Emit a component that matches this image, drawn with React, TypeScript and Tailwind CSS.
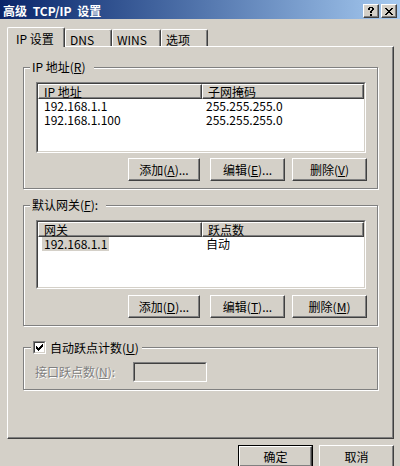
import React from "react";

const raised =
  "border border-t-white border-l-white border-r-[#404040] border-b-[#404040] shadow-[inset_-1px_-1px_0_#808080]";

function U({ children }: { children: React.ReactNode }) {
  return <span className="underline underline-offset-[1px] decoration-1">{children}</span>;
}

function Btn({ children, className = "" }: { children: React.ReactNode; className?: string }) {
  return (
    <div className={`h-[23px] flex items-center justify-center bg-[#d4d0c8] ${raised} ${className}`}>
      <span className="leading-[12px] whitespace-nowrap">{children}</span>
    </div>
  );
}

function Sunken({
  className = "",
  inner = "",
  children,
}: {
  className?: string;
  inner?: string;
  children?: React.ReactNode;
}) {
  return (
    <div className={`border border-t-[#808080] border-l-[#808080] border-r-white border-b-white ${className}`}>
      <div
        className={`h-full w-full border border-t-[#404040] border-l-[#404040] border-r-[#d4d0c8] border-b-[#d4d0c8] ${inner}`}
      >
        {children}
      </div>
    </div>
  );
}

function HeaderCell({ children, className = "" }: { children: React.ReactNode; className?: string }) {
  return (
    <div className={`h-[15px] flex items-center pl-[5px] bg-[#d4d0c8] ${raised} ${className}`}>
      <span className="leading-[12px]">{children}</span>
    </div>
  );
}

type Row = { a: string; b: string; sel?: boolean };

function ListView({ height, header, rows }: { height: string; header: [string, string]; rows: Row[] }) {
  return (
    <Sunken className={`w-[330px] ${height}`} inner="bg-white flex flex-col overflow-hidden">
      <div className="flex">
        <HeaderCell className="w-[164px]">{header[0]}</HeaderCell>
        <HeaderCell className="flex-1">{header[1]}</HeaderCell>
      </div>
      {rows.map((r, i) => (
        <div key={i} className="flex h-[14px]">
          <div className="w-[164px] pl-[4px] flex">
            <span className={`px-[2px] h-full flex items-center leading-[12px] ${r.sel ? "bg-[#d4d0c8]" : ""}`}>
              {r.a}
            </span>
          </div>
          <div className="pl-[4px] flex items-center leading-[12px]">{r.b}</div>
        </div>
      ))}
    </Sunken>
  );
}

function Group({
  legend,
  className = "",
  children,
}: {
  legend: React.ReactNode;
  className?: string;
  children?: React.ReactNode;
}) {
  return (
    <div
      className={`relative shrink-0 border border-[#808080] shadow-[inset_1px_1px_0_#fff,1px_1px_0_#fff] ${className}`}
    >
      <div className="absolute left-[6px] top-[-7px] bg-[#d4d0c8] pl-[2px] pr-[8px] leading-[12px] whitespace-nowrap">
        {legend}
      </div>
      {children}
    </div>
  );
}

function Pixels({ rows, w, h, color = "#000" }: { rows: string[]; w: number; h: number; color?: string }) {
  const rects: React.ReactNode[] = [];
  rows.forEach((r, y) =>
    r.split("").forEach((c, x) => {
      if (c === "X") rects.push(<rect key={`${x}-${y}`} x={x} y={y} width={1} height={1} fill={color} />);
    })
  );
  return (
    <svg width={w} height={h} viewBox={`0 0 ${w} ${h}`} shapeRendering="crispEdges">
      {rects}
    </svg>
  );
}

const closeGlyph = ["XX....XX", ".XX..XX.", "..XXXX..", "...XX...", "..XXXX..", ".XX..XX.", "XX....XX"];
const helpGlyph = [".XXXX.", "XX..XX", "XX..XX", "...XX.", "..XX..", "..XX..", "......", "..XX..", "..XX.."];
const checkGlyph = ["......X", ".....XX", "X...XXX", "XX.XXX.", "XXXXX..", ".XXX...", "..X...."];

function TitleBtn({ children }: { children: React.ReactNode }) {
  return (
    <div className={`w-[16px] h-[14px] flex items-center justify-center bg-[#d4d0c8] ${raised}`}>{children}</div>
  );
}

function Tab({ label, selected = false, w }: { label: string; selected?: boolean; w: string }) {
  return selected ? (
    <div
      className={`${w} h-[20px] -mb-px relative z-10 bg-[#d4d0c8] border-l border-t border-r border-l-white border-t-white border-r-[#404040] shadow-[inset_-1px_0_0_#808080] rounded-t-[2px] pl-[8px] pt-[5px] leading-[12px] whitespace-nowrap`}
    >
      {label}
    </div>
  ) : (
    <div
      className={`${w} h-[17px] bg-[#d4d0c8] border-l border-t border-r border-l-white border-t-white border-r-[#404040] shadow-[inset_-1px_0_0_#808080] rounded-t-[2px] pl-[4px] pt-[4px] leading-[12px] whitespace-nowrap`}
    >
      {label}
    </div>
  );
}

export default function App() {
  return (
    <div className="w-[400px] h-[466px] overflow-hidden bg-[#d4d0c8] font-['Noto_Sans_CJK_SC',sans-serif] text-[12px] text-black">
      {/* title bar */}
      <div className="h-[19px] flex items-center pt-[3px] pl-[3px] pr-[3px] bg-linear-to-r from-[#0a246a] to-[#a6caf0]">
        <span className="text-white font-bold leading-[12px] [word-spacing:3px] whitespace-nowrap">
          高级 TCP/IP 设置
        </span>
        <div className="ml-auto flex gap-[2px]">
          <TitleBtn>
            <Pixels rows={helpGlyph} w={6} h={9} />
          </TitleBtn>
          <TitleBtn>
            <Pixels rows={closeGlyph} w={8} h={7} />
          </TitleBtn>
        </div>
      </div>

      {/* tabs */}
      <div className="h-[27px] flex items-end pl-[7px]">
        <Tab label="IP 设置" selected w="w-[58px]" />
        <Tab label="DNS" w="w-[47px]" />
        <Tab label="WINS" w="w-[49px]" />
        <Tab label="选项" w="w-[47px]" />
      </div>

      {/* tab panel */}
      <div className={`ml-[7px] w-[387px] h-[393px] ${raised} flex flex-col pl-[15px] pt-[20px]`}>
        <Group
          className="w-[355px] h-[122px] pl-[12px] pt-[14px]"
          legend={
            <>
              IP 地址(<U>R</U>)
            </>
          }
        >
          <ListView
            height="h-[71px]"
            header={["IP 地址", "子网掩码"]}
            rows={[
              { a: "192.168.1.1", b: "255.255.255.0" },
              { a: "192.168.1.100", b: "255.255.255.0" },
            ]}
          />
          <div className="w-[331px] flex justify-end mt-[5px]">
            <Btn className="w-[72px]">
              添加(<U>A</U>)...
            </Btn>
            <Btn className="w-[75px] ml-[10px]">
              编辑(<U>E</U>)...
            </Btn>
            <Btn className="w-[75px] ml-[7px]">
              删除(<U>V</U>)
            </Btn>
          </div>
        </Group>

        <Group
          className="w-[355px] h-[121px] mt-[16px] pl-[12px] pt-[14px]"
          legend={
            <>
              默认网关(<U>F</U>):
            </>
          }
        >
          <ListView height="h-[69px]" header={["网关", "跃点数"]} rows={[{ a: "192.168.1.1", b: "自动", sel: true }]} />
          <div className="w-[331px] flex justify-end mt-[6px]">
            <Btn className="w-[72px]">
              添加(<U>D</U>)...
            </Btn>
            <Btn className="w-[75px] ml-[10px]">
              编辑(<U>T</U>)...
            </Btn>
            <Btn className="w-[75px] ml-[7px]">
              删除(<U>M</U>)
            </Btn>
          </div>
        </Group>

        <div className="relative shrink-0 w-[355px] h-[43px] mt-[21px] border border-[#808080] shadow-[inset_1px_1px_0_#fff,1px_1px_0_#fff]">
          <div className="absolute left-[7px] top-[-7px] bg-[#d4d0c8] pl-[2px] pr-[3px] flex items-center gap-[4px] whitespace-nowrap">
            <Sunken className="w-[13px] h-[13px]" inner="bg-white flex items-center justify-center">
              <Pixels rows={checkGlyph} w={7} h={7} />
            </Sunken>
            <span className="leading-[12px]">
              自动跃点计数(<U>U</U>)
            </span>
          </div>
          <div className="flex items-center pl-[11px] pt-[14px]">
            <span className="w-[98px] leading-[12px] text-[#808080] [text-shadow:1px_1px_0_#fff] whitespace-nowrap">
              接口跃点数(<U>N</U>):
            </span>
            <Sunken className="w-[74px] h-[20px]" inner="bg-[#d4d0c8]" />
          </div>
        </div>
      </div>

      {/* dialog buttons */}
      <div className="flex justify-end gap-[6px] pr-[6px] mt-[6px]">
        <div className="w-[75px] h-[23px] border border-black">
          <div className={`w-full h-full flex items-center justify-center ${raised}`}>
            <span className="leading-[12px]">确定</span>
          </div>
        </div>
        <Btn className="w-[75px]">取消</Btn>
      </div>
    </div>
  );
}
